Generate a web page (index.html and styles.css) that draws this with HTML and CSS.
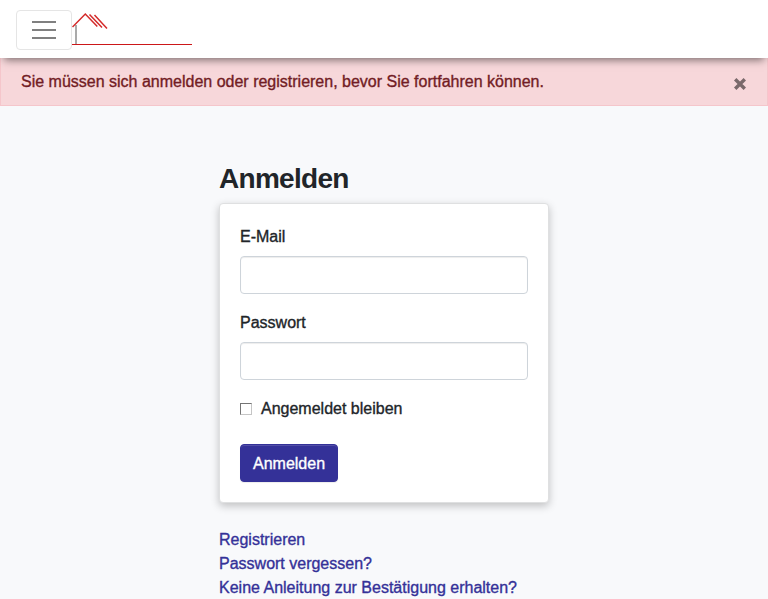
FILE: index.html
```html
<!DOCTYPE html>
<html lang="de">
<head>
<meta charset="utf-8">
<title>Anmelden</title>
<link rel="stylesheet" href="styles.css">
</head>
<body>
<header class="navbar">
  <button class="toggler" type="button" aria-label="Navigation">
    <svg width="30" height="30" viewBox="0 0 30 30"><path d="M3 7h24M3 15h24M3 23h24" stroke="#808080" stroke-width="2"/></svg>
  </button>
  <a class="brand" href="#" aria-label="Startseite">
    <svg width="120" height="40" viewBox="0 0 120 40" fill="none">
      <path d="M4 15v19" stroke="#aaa" stroke-width="2"/>
      <path d="M.5 17L13.300 4l12 12.500M17.500 4.500l12.500 13M22.500 5l12.500 13.500" stroke="#d42a2a" stroke-width="1.500"/>
      <path d="M0 34.500h120" stroke="#cc1719"/>
    </svg>
  </a>
</header>
<div class="alert" role="alert">
  <span class="alert-text">Sie müssen sich anmelden oder registrieren, bevor Sie fortfahren können.</span>
  <button class="close" type="button" aria-label="Schließen">
    <svg width="14" height="14" viewBox="0 0 14 14"><path d="M2.200 2.200l9.600 9.600M11.800 2.200l-9.600 9.600" stroke="#7a696b" stroke-width="3.400"/></svg>
  </button>
</div>
<main class="content">
  <h1 class="title">Anmelden</h1>
  <form class="card">
    <label class="label" for="email">E-Mail</label>
    <input class="field" id="email" type="email">
    <label class="label" for="password">Passwort</label>
    <input class="field" id="password" type="password">
    <label class="remember"><input class="check" type="checkbox"><span>Angemeldet bleiben</span></label>
    <button class="submit" type="button">Anmelden</button>
  </form>
  <nav class="links">
    <a class="link" href="#">Registrieren</a>
    <a class="link" href="#">Passwort vergessen?</a>
    <a class="link" href="#">Keine Anleitung zur Bestätigung erhalten?</a>
  </nav>
</main>
</body>
</html>
```
FILE: styles.css
```css
* { box-sizing: border-box; }
body {
  margin: 0;
  height: 599px;
  overflow: hidden;
  background: #f8f9fb;
  color: #212529;
  font: 16px/24px "Liberation Sans", Arial, sans-serif;
  -webkit-text-stroke: .35px;
}
button, input { font: inherit; }
.navbar {
  position: relative;
  z-index: 1;
  display: flex;
  align-items: center;
  height: 58px;
  padding: 2px 16px 0;
  background: #fff;
  box-shadow: 0 6px 8px -4px rgba(0, 0, 0, .5);
}
.toggler {
  width: 56px;
  height: 40px;
  padding: 4px 12px;
  border: 1px solid #e5e5e5;
  border-radius: 4px;
  background: #fff;
}
.toggler svg, .brand svg, .close svg { display: block; }
.brand { height: 40px; }
.alert {
  display: flex;
  justify-content: space-between;
  height: 50px;
  margin-top: -2px;
  padding: 13px 20px 11px;
  border: 1px solid #f5c6cb;
  background: #f7d7da;
  color: #721c24;
}
.close {
  margin: 7px 0 0;
  padding: 0;
  height: 14px;
  border: 0;
  background: none;
}
.content { width: 330px; margin: 56px auto 0; }
.title {
  margin: 0 0 7px;
  font-size: 28px;
  line-height: 34px;
  font-weight: 700;
  letter-spacing: -.7px;
  -webkit-text-stroke: 0;
}
.card {
  height: 300px;
  padding: 20px;
  border: 1px solid #dfe0e1;
  border-radius: 4px;
  background: #fff;
  box-shadow: 0 3px 8px rgba(0, 0, 0, .23);
}
.label { display: block; padding-top: 1px; margin-bottom: 7px; }
.field {
  display: block;
  width: 100%;
  height: 38px;
  margin: 0 0 16px;
  padding: 6px 12px;
  border: 1px solid #ced4da;
  border-radius: 4px;
  background: #fff;
  box-shadow: inset 0 1px 1px rgba(0, 0, 0, .075);
}
.remember { display: flex; align-items: center; gap: 9px; padding-top: 1px; }
.check {
  appearance: none;
  width: 12px;
  height: 12px;
  margin: 0;
  border: 1px solid;
  border-color: #747474 #c5c5c5 #c5c5c5 #747474;
  background: #fff;
}
.submit {
  display: block;
  height: 38px;
  margin-top: 23px;
  padding: 2px 12px 0;
  border: 1px solid #343198;
  border-radius: 4px;
  background: #343198;
  color: #fff;
  box-shadow: inset 0 1px 0 rgba(255, 255, 255, .15), 0 1px 1px rgba(0, 0, 0, .075);
}
.links { display: flex; flex-direction: column; margin-top: 25px; }
.link { color: #343198; text-decoration: none; }
```
